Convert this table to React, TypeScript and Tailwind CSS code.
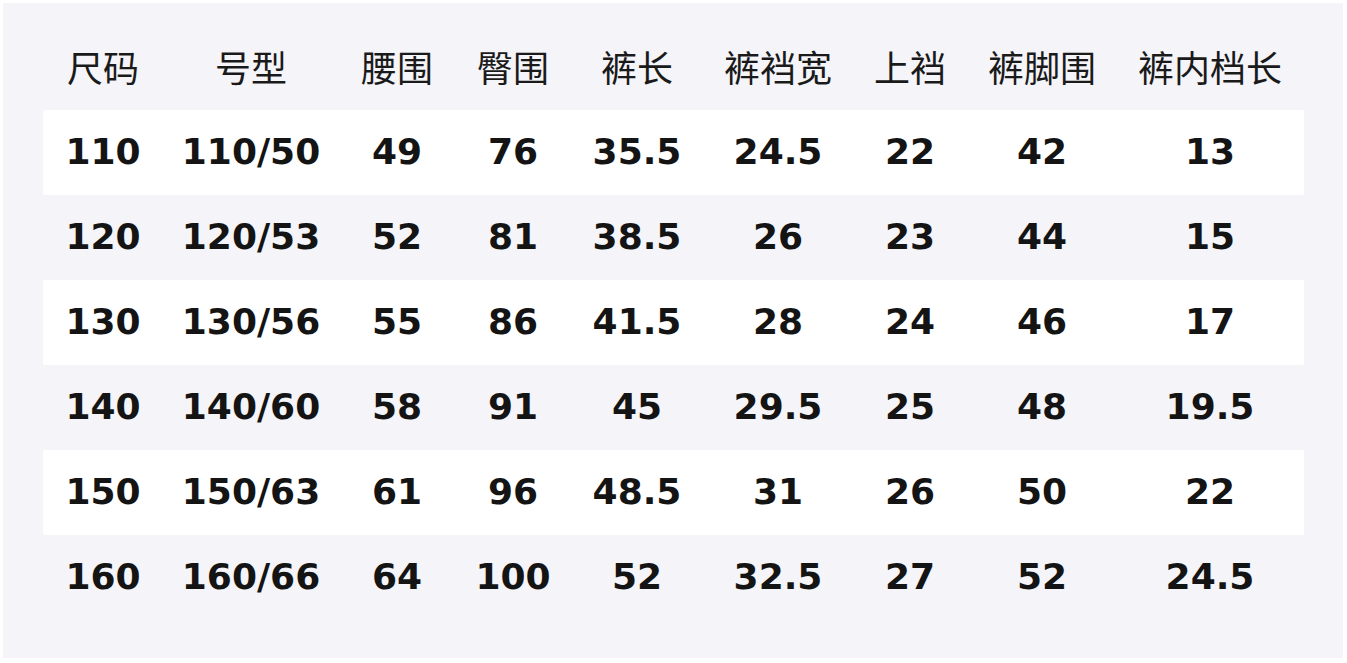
import React from "react";

const headers = ["尺码", "号型", "腰围", "臀围", "裤长", "裤裆宽", "上裆", "裤脚围", "裤内档长"];
const rows = [
  ["110", "110/50", "49", "76", "35.5", "24.5", "22", "42", "13"],
  ["120", "120/53", "52", "81", "38.5", "26", "23", "44", "15"],
  ["130", "130/56", "55", "86", "41.5", "28", "24", "46", "17"],
  ["140", "140/60", "58", "91", "45", "29.5", "25", "48", "19.5"],
  ["150", "150/63", "61", "96", "48.5", "31", "26", "50", "22"],
  ["160", "160/66", "64", "100", "52", "32.5", "27", "52", "24.5"],
];

const cols = "grid grid-cols-[120px_176px_116px_116px_132px_150px_114px_150px_186px]";

export default function App() {
  return (
    <div className="w-full h-[663px] bg-white pt-[3px] pl-[3px] pr-[4px] pb-[5px]">
      <div className="h-full bg-[#f4f4f9] pl-[40px] pr-[39px] pt-[18px]">
        <div className={`${cols} h-[89px] items-center text-[36px] text-[#1a1a1a] [font-family:'Noto_Sans_CJK_SC',sans-serif]`}>
          {headers.map((h) => (
            <div key={h} className="text-center leading-none">{h}</div>
          ))}
        </div>
        {rows.map((r, i) => (
          <div
            key={i}
            className={`${cols} h-[85px] items-center rounded-[2px] ${i % 2 === 0 ? "bg-white" : ""} text-[36px] font-bold text-[#141414] [font-family:'DejaVu_Sans',sans-serif]`}
          >
            {r.map((c, j) => (
              <div key={j} className="text-center leading-none pb-[1px]">{c}</div>
            ))}
          </div>
        ))}
      </div>
    </div>
  );
}
